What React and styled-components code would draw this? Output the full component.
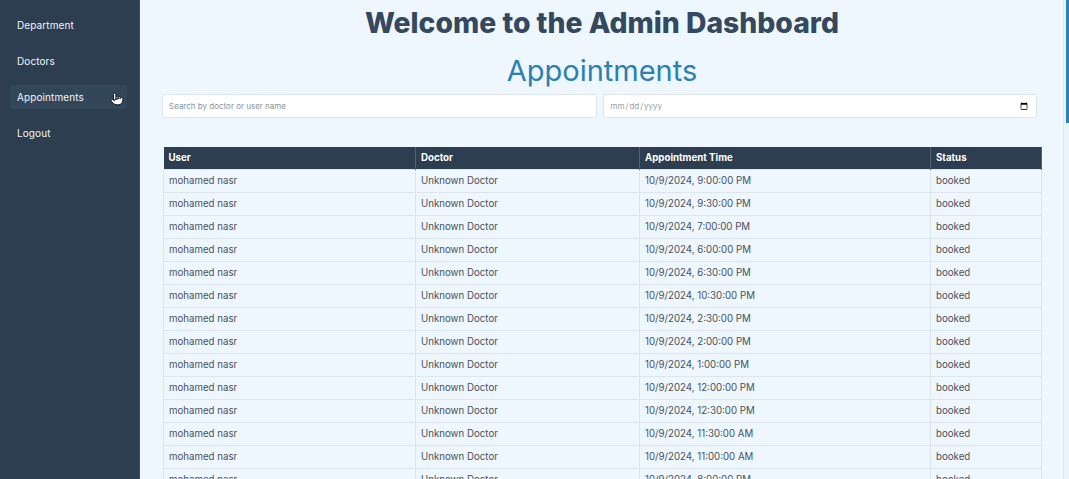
import React from 'react'
import styled, { createGlobalStyle } from 'styled-components'
import { Pointer } from 'lucide-react'

const GlobalStyle = createGlobalStyle`
  html, body {
    margin: 0;
    padding: 0;
    height: 100%;
    overflow: hidden;
  }
  body {
    font-family: Inter, "Noto Sans", sans-serif;
    background: #eef6fe;
  }
  * { box-sizing: border-box; }
`

const baseTimes = [
  '10/9/2024, 9:00:00 PM',
  '10/9/2024, 9:30:00 PM',
  '10/9/2024, 7:00:00 PM',
  '10/9/2024, 6:00:00 PM',
  '10/9/2024, 6:30:00 PM',
  '10/9/2024, 10:30:00 PM',
  '10/9/2024, 2:30:00 PM',
  '10/9/2024, 2:00:00 PM',
  '10/9/2024, 1:00:00 PM',
  '10/9/2024, 12:00:00 PM',
  '10/9/2024, 12:30:00 PM',
  '10/9/2024, 11:30:00 AM',
  '10/9/2024, 11:00:00 AM',
  '10/9/2024, 8:00:00 PM',
  '10/9/2024, 8:30:00 PM',
  '10/9/2024, 7:30:00 PM',
]

// the real list runs well below the fold (see the short scroll thumb)
const appointments = Array.from({ length: 70 }, (_, i) => ({
  user: 'mohamed nasr',
  doctor: 'Unknown Doctor',
  time: baseTimes[i % baseTimes.length],
  status: 'booked',
}))

const navItems = ['Department', 'Doctors', 'Appointments', 'Logout']

const App = () => {
  return (
    <Layout>
      <GlobalStyle />
      <Sidebar>
        {navItems.map((item) => (
          <NavItem key={item} $active={item === 'Appointments'}>
            {item}
            {item === 'Appointments' && (
              <Cursor>
                <Pointer size={14} fill="#fff" color="#111" strokeWidth={1.6} />
              </Cursor>
            )}
          </NavItem>
        ))}
      </Sidebar>
      <Main>
        <Title>Welcome to the Admin Dashboard</Title>
        <SubTitle>Appointments</SubTitle>
        <Filters>
          <Input type="text" placeholder="Search by doctor or user name" />
          <Input type="date" />
        </Filters>
        <Table>
          <thead>
            <tr>
              <Th $w={252}>User</Th>
              <Th $w={224}>Doctor</Th>
              <Th $w={291}>Appointment Time</Th>
              <Th>Status</Th>
            </tr>
          </thead>
          <tbody>
            {appointments.map((a, i) => (
              <tr key={i}>
                <Td>{a.user}</Td>
                <Td>{a.doctor}</Td>
                <Td>{a.time}</Td>
                <Td>{a.status}</Td>
              </tr>
            ))}
          </tbody>
        </Table>
      </Main>
      <ScrollTrack>
        <ScrollThumb />
      </ScrollTrack>
    </Layout>
  )
}

const Layout = styled.div`
  position: relative;
  display: flex;
  height: 100vh;
  width: 100vw;
`

const Sidebar = styled.nav`
  width: 140px;
  flex-shrink: 0;
  background: #2c3e50;
  border-right: 1px solid #3a4d61;
  padding: 13px 12px 0 10px;
  display: flex;
  flex-direction: column;
  gap: 12px;
`

const NavItem = styled.div`
  position: relative;
  height: 24px;
  display: flex;
  align-items: center;
  padding-left: 7px;
  border-radius: 3px;
  color: #f2f5f8;
  font-size: 10px;
  letter-spacing: 0.1px;
  background: ${(p) => (p.$active ? '#33475a' : 'transparent')};
  cursor: pointer;
`

const Cursor = styled.span`
  position: absolute;
  left: 100px;
  top: 7px;
  display: flex;
`

const Main = styled.main`
  flex: 1;
  overflow: hidden;
  padding: 0 27px 20px 22px;
  background: #eef6fe;
`

const ScrollTrack = styled.div`
  position: absolute;
  top: 0;
  right: 0;
  bottom: 0;
  width: 6px;
  background: #eaf3fc;
  border-left: 1px solid #dfe8f2;
`

const ScrollThumb = styled.div`
  position: absolute;
  top: 0;
  right: 0;
  width: 3px;
  height: 123px;
  background: #2b82b6;
`

const Title = styled.h1`
  margin: 6px 0 0;
  text-align: center;
  font-size: 28.3px;
  font-weight: 800;
  line-height: 34px;
  color: #34495e;
`

const SubTitle = styled.h2`
  margin: 14px 0 0;
  text-align: center;
  font-size: 29px;
  font-weight: 400;
  line-height: 34px;
  color: #2a80b0;
`

const Filters = styled.div`
  display: flex;
  gap: 6px;
  margin: 6px 5px 0 0;
`

const Input = styled.input`
  flex: 1;
  height: 24px;
  padding: 0 6px;
  border: 1px solid #dfe5ec;
  border-radius: 3px;
  background: #fff;
  font-family: Inter, sans-serif;
  font-size: 8px;
  color: #9aa3ad;
  outline: none;

  &::placeholder {
    color: #8a939c;
  }
  &::-webkit-calendar-picker-indicator {
    width: 8px;
    height: 8px;
  }
`

const Table = styled.table`
  width: 879px;
  margin: 29px 0 0 1px;
  border-collapse: collapse;
  table-layout: fixed;
  font-size: 9.7px;
`

const Th = styled.th`
  width: ${(p) => (p.$w ? `${p.$w}px` : 'auto')};
  height: 22px;
  padding: 0 5px;
  background: #2c3e50;
  color: #fff;
  text-align: left;
  font-weight: 700;
  border-right: 1px solid #506275;
`

const Td = styled.td`
  height: 23px;
  padding: 0 5px;
  color: #4a525b;
  border: 1px solid #dde5ee;
  white-space: nowrap;
`

export default App
